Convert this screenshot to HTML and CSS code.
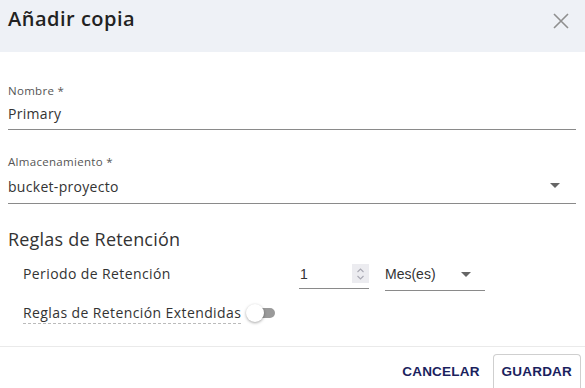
FILE: index.html
```html
<!DOCTYPE html>
<html lang="es">
<head>
<meta charset="utf-8">
<link rel="stylesheet" href="styles.css">
</head>
<body>
<div class="dialog">
  <header class="head">
    <h1 class="title">Añadir copia</h1>
    <button class="close" aria-label="Cerrar">
      <svg width="16" height="16" viewBox="0 0 16 16"><path d="M1 1L15 15M15 1L1 15" stroke="#8f8f8f" stroke-width="1.6" fill="none"/></svg>
    </button>
  </header>
  <main class="body">
    <div class="field">
      <label class="label">Nombre *</label>
      <div class="control">Primary</div>
    </div>
    <div class="field field-second">
      <label class="label">Almacenamiento *</label>
      <div class="control select">bucket-proyecto<span class="caret"></span></div>
    </div>
    <h2 class="section">Reglas de Retención</h2>
    <div class="row">
      <span class="row-label">Periodo de Retención</span>
      <div class="num">
        <span class="num-val">1</span>
        <span class="spin">
          <svg width="9" height="14" viewBox="0 0 9 14"><path d="M1.5 5L4.5 2L7.5 5M1.5 9L4.5 12L7.5 9" stroke="#a9a9b3" stroke-width="1.1" fill="none"/></svg>
        </span>
      </div>
      <div class="unit">Mes(es)<span class="caret"></span></div>
    </div>
    <div class="row row-toggle">
      <span class="row-label dashed">Reglas de Retención Extendidas</span>
      <span class="toggle"><span class="knob"></span></span>
    </div>
  </main>
  <footer class="foot">
    <button class="btn">CANCELAR</button>
    <button class="btn btn-outline">GUARDAR</button>
  </footer>
</div>
</body>
</html>
```
FILE: styles.css
```css
* { box-sizing: border-box; }
html, body { margin: 0; padding: 0; background: #fff; }
body { font-family: "Open Sans", "Lato", sans-serif; color: #333; width: 585px; height: 388px; overflow: hidden; }
.dialog { display: flex; flex-direction: column; height: 388px; }
.head { background: #eef1f6; height: 52px; display: flex; justify-content: space-between; align-items: flex-start; padding: 5px 16px 0 8px; }
.title { margin: 0; font-size: 20px; font-weight: 600; color: #222; letter-spacing: 0.5px; line-height: 28px; }
.close { border: 0; background: transparent; padding: 0; margin-top: 8px; width: 16px; height: 16px; display: block; }
.close svg { display: block; }
.body { padding: 32px 9px 0 8px; flex: 1; }
.field { display: flex; flex-direction: column; }
.field-second { margin-top: 25px; }
.label { font-size: 11.5px; color: #555; line-height: 14px; letter-spacing: 0.3px; }
.control { font-size: 14px; color: #333; line-height: 20px; padding: 6px 0 5px 0; border-bottom: 1px solid #8a8a8a; position: relative; letter-spacing: 0.3px; }
.field-second .control { padding: 8px 0 6px 0; }
.select .caret { position: absolute; right: 16px; top: 14px; }
.caret { width: 0; height: 0; border-left: 5px solid transparent; border-right: 5px solid transparent; border-top: 5px solid #666; }
.section { margin: 23px 0 0; font-size: 18px; font-weight: 400; color: #333; line-height: 24px; letter-spacing: 0.2px; }
.row { display: flex; align-items: flex-start; padding-left: 15px; margin-top: 13px; }
.row-label { font-size: 14px; color: #333; width: 276px; line-height: 18px; margin-top: 1px; letter-spacing: 0.4px; }
.num { width: 70px; height: 25px; display: flex; justify-content: space-between; align-items: flex-start; border-bottom: 1px solid #8a8a8a; font-family: "Liberation Sans", Arial, sans-serif; font-size: 14px; line-height: 18px; padding-top: 1px; }
.num-val { padding-left: 1px; }
.spin { width: 17px; height: 19px; background: #ececf0; display: flex; align-items: center; justify-content: center; margin-top: -1px; }
.unit { margin-left: 16px; width: 100px; height: 27px; border-bottom: 1px solid #8a8a8a; display: flex; justify-content: space-between; align-items: flex-start; padding-top: 1px; padding-right: 14px; font-family: "Liberation Sans", Arial, sans-serif; font-size: 14px; line-height: 18px; color: #333; }
.unit .caret { margin-top: 7px; }
.row-toggle { margin-top: 13px; align-items: center; }
.row-toggle .row-label { width: auto; border-bottom: 1px dashed #bbb; padding-bottom: 1px; margin-top: 0; }
.toggle { position: relative; width: 22px; height: 10px; border-radius: 5px; background: #9a9a9a; margin-left: 12px; margin-top: -2px; }
.knob { position: absolute; left: -7px; top: -4px; width: 18px; height: 18px; border-radius: 50%; background: #fff; box-shadow: 0 1px 3px rgba(0,0,0,0.35); }
.foot { height: 42px; border-top: 1px solid #eaeaea; display: flex; justify-content: flex-end; align-items: flex-end; padding-right: 4px; gap: 4px; }
.btn { font-family: "Liberation Sans", Arial, sans-serif; font-weight: 700; font-size: 13.5px; color: #1b1f5e; background: transparent; border: 1px solid transparent; padding: 0 8px; height: 34px; border-radius: 4px 4px 0 0; border-bottom: 0; letter-spacing: 0.2px; }
.btn-outline { border-color: #cfcfcf; }
```
